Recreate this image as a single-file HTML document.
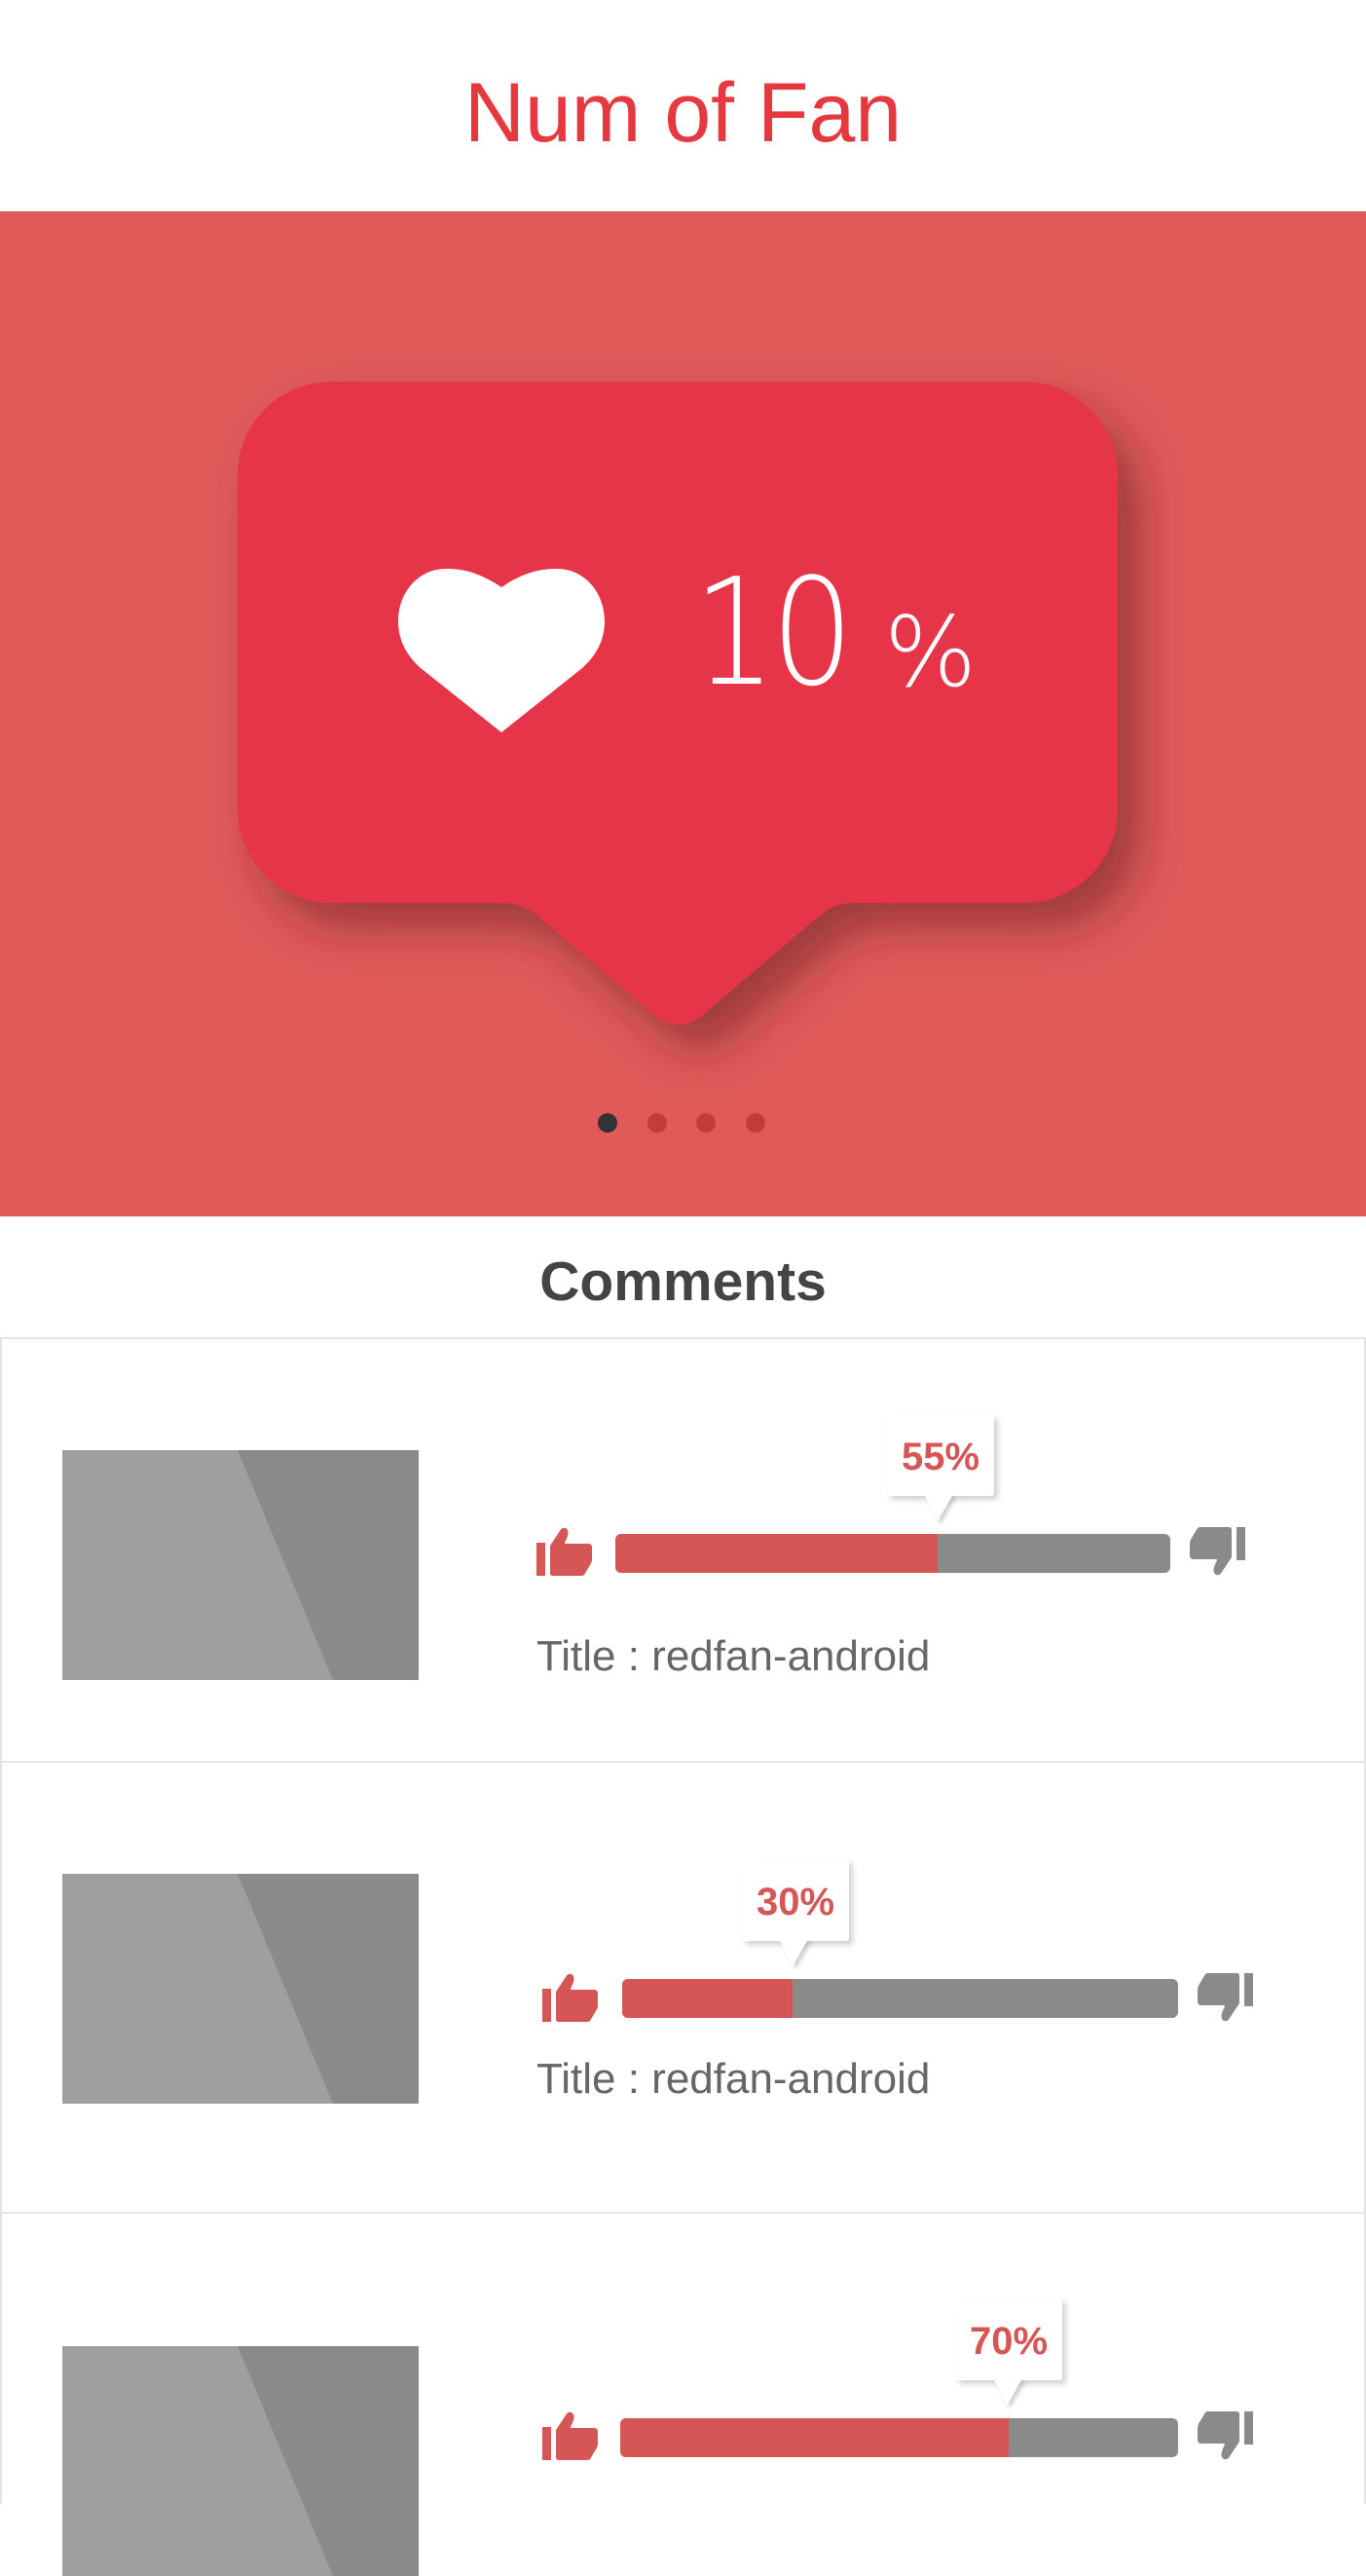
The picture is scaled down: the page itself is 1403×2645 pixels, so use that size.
<!DOCTYPE html>
<html><head><meta charset="utf-8"><style>
*{margin:0;padding:0;box-sizing:border-box}
body{width:1403px;height:2496px;overflow:hidden;background:#fff;font-family:"Liberation Sans",sans-serif;position:relative}
.abs{position:absolute}
.title{top:0;left:0;width:1403px;height:217px;text-align:center;line-height:232px;font-size:86px;color:#e5383f}
.banner{top:217px;left:0;width:1403px;height:1032px;background:#e05a5a}
.comments{top:1249px;left:0;width:1403px;height:124px;text-align:center;line-height:134px;font-size:57px;font-weight:bold;color:#444}
.card{left:0;width:1403px;border:2px solid #e4e4e4;border-bottom:none;background:#fff}
.thumb{width:366px;height:236px;left:64px;background:#9f9f9f;overflow:hidden}
.bar{height:40px;border-radius:6px;background:#8a8a8a;overflow:hidden}
.bar i{display:block;height:100%;background:#d65656}
.tip{background:#fff;box-shadow:4px 4px 6px rgba(0,0,0,.18);border-radius:3px;color:#d65656;font-weight:bold;font-size:40px;text-align:center}
.ttl{font-size:44px;color:#666}
.dot{width:20px;height:20px;border-radius:50%;top:1143px;background:#c53a3a}
.num{font-family:"DejaVu Sans",sans-serif;font-weight:200;color:#fff;white-space:nowrap}
</style></head><body>
<div class="abs title">Num of Fan</div>
<div class="abs banner"></div>
<svg class="abs" style="left:0;top:217px" width="1403" height="1032" viewBox="0 217 1403 1032">
<defs><filter id="sh" x="-20%" y="-20%" width="150%" height="150%"><feDropShadow dx="22" dy="26" stdDeviation="22" flood-color="#6a1f1f" flood-opacity="0.55"/></filter></defs>
<path filter="url(#sh)" fill="#e6364a" d="M340 392 H1052 A96 96 0 0 1 1148 488 V831 A96 96 0 0 1 1052 927 H878 Q858 927 842 940 L722 1042 Q697 1062 672 1042 L552 940 Q536 927 516 927 H340 A96 96 0 0 1 244 831 V488 A96 96 0 0 1 340 392 Z"/>
<path fill="#fff" d="M515 603 C490 586 472 584 458 584 C430 584 409 608 409 638 C409 660 420 675 432 686 L515 752 L598 686 C610 675 621 660 621 638 C621 608 600 584 572 584 C558 584 540 586 515 603 Z"/>
</svg>
<div class="abs num" style="left:712px;top:560px;font-size:152px;line-height:180px;letter-spacing:-6px;transform:scaleX(0.88);transform-origin:left top">10</div>
<div class="abs num" style="left:908px;top:610px;font-size:100px;line-height:120px">%</div>
<div class="abs dot" style="left:614px;background:#333"></div>
<div class="abs dot" style="left:665px"></div>
<div class="abs dot" style="left:715px"></div>
<div class="abs dot" style="left:766px"></div>
<div class="abs comments">Comments</div>

<div class="abs card" style="top:1373px;height:435px"></div>
<div class="abs card" style="top:1808px;height:463px"></div>
<div class="abs card" style="top:2271px;height:300px"></div>

<svg width="0" height="0" style="position:absolute"><defs>
<filter id="ts" x="-30%" y="-30%" width="180%" height="180%"><feDropShadow dx="3" dy="3" stdDeviation="2" flood-color="#000" flood-opacity="0.2"/></filter>
<symbol id="up" viewBox="0 0 58 50"><rect x="0" y="16" width="9" height="34" fill="#d65656"/><path fill="#d65656" d="M14 19 L24 4 Q26 0 30 1 Q35 4 30 14 Q28 17 30 17 H53 Q57 17 57 21 V33 Q57 36 55 39 L49 49 Q48 50 46 50 H17 Q14 50 14 47 Z"/></symbol>
<symbol id="dn" viewBox="0 0 58 50"><rect x="49" y="0" width="9" height="34" fill="#8a8a8a"/><path fill="#8a8a8a" d="M44 31 L34 46 Q32 50 28 49 Q23 46 28 36 Q30 33 28 33 H5 Q1 33 1 29 V17 Q1 14 3 11 L9 1 Q10 0 12 0 H41 Q44 0 44 3 Z"/></symbol>
</defs></svg>

<!-- card 1 -->
<div class="abs thumb" style="top:1489px"><svg width="366" height="236"><polygon points="180,0 366,0 366,236 278,236" fill="#8a8a8a"/></svg></div>
<svg class="abs" style="left:551px;top:1568px" width="58" height="50"><use href="#up"/></svg>
<div class="abs bar" style="left:632px;top:1575px;width:570px"><i style="width:331px"></i></div>
<svg class="abs" style="left:1221px;top:1568px" width="58" height="50"><use href="#dn"/></svg>
<div class="abs tip" style="left:911px;top:1452px;width:110px;height:84px;line-height:88px">55%</div>
<svg class="abs" style="left:945px;top:1534px" width="40" height="34"><polygon filter="url(#ts)" points="4,0 34,0 18,28" fill="#fff"/><rect x="2" y="0" width="34" height="2" fill="#fff"/></svg>
<div class="abs ttl" style="left:551px;top:1676px">Title : redfan-android</div>

<!-- card 2 -->
<div class="abs thumb" style="top:1924px"><svg width="366" height="236"><polygon points="180,0 366,0 366,236 278,236" fill="#8a8a8a"/></svg></div>
<svg class="abs" style="left:557px;top:2026px" width="58" height="50"><use href="#up"/></svg>
<div class="abs bar" style="left:639px;top:2032px;width:571px"><i style="width:175px"></i></div>
<svg class="abs" style="left:1229px;top:2026px" width="58" height="50"><use href="#dn"/></svg>
<div class="abs tip" style="left:762px;top:1909px;width:110px;height:84px;line-height:88px">30%</div>
<svg class="abs" style="left:796px;top:1991px" width="40" height="34"><polygon filter="url(#ts)" points="4,0 34,0 18,28" fill="#fff"/><rect x="2" y="0" width="34" height="2" fill="#fff"/></svg>
<div class="abs ttl" style="left:551px;top:2110px">Title : redfan-android</div>

<!-- card 3 -->
<div class="abs thumb" style="top:2409px"><svg width="366" height="236"><polygon points="180,0 366,0 366,236 278,236" fill="#8a8a8a"/></svg></div>
<svg class="abs" style="left:557px;top:2476px" width="58" height="50"><use href="#up"/></svg>
<div class="abs bar" style="left:637px;top:2483px;width:573px"><i style="width:399px"></i></div>
<svg class="abs" style="left:1229px;top:2476px" width="58" height="50"><use href="#dn"/></svg>
<div class="abs tip" style="left:981px;top:2360px;width:110px;height:84px;line-height:88px">70%</div>
<svg class="abs" style="left:1016px;top:2442px" width="40" height="34"><polygon filter="url(#ts)" points="4,0 34,0 18,28" fill="#fff"/><rect x="2" y="0" width="34" height="2" fill="#fff"/></svg>
</body></html>
